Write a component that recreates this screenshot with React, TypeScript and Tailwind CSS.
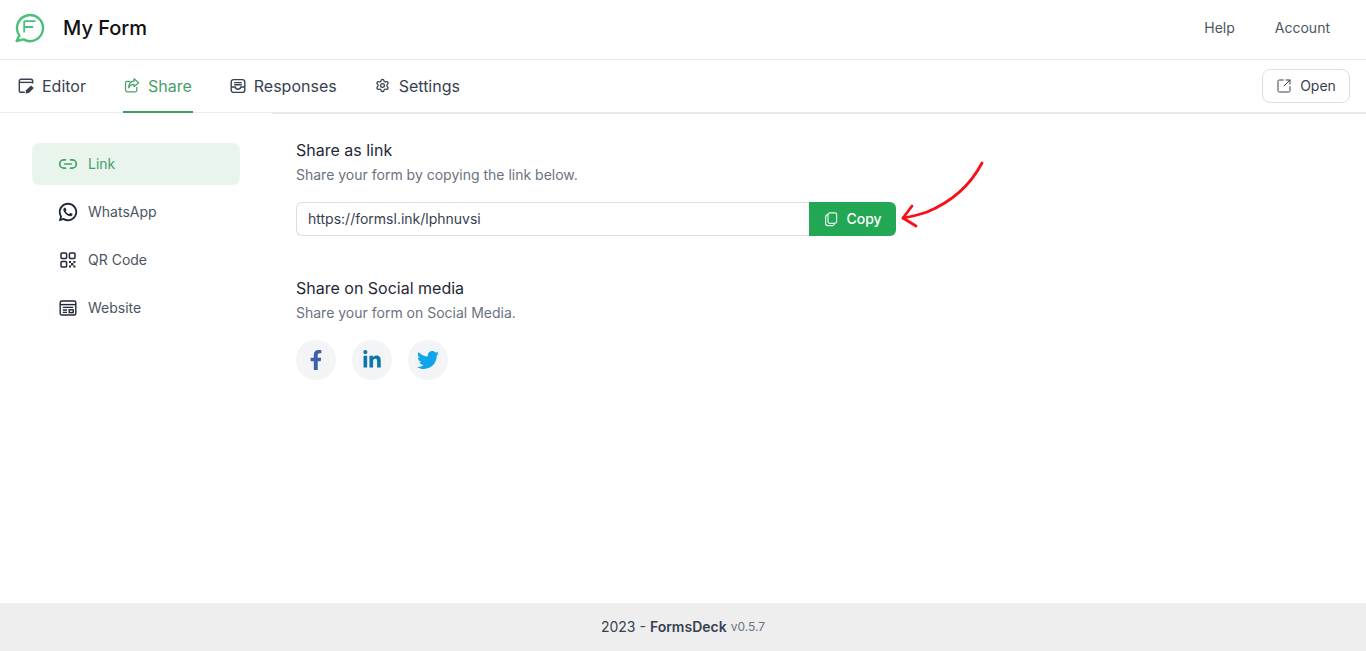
import { Link2, Settings, SquareArrowOutUpRight } from "lucide-react"
import { RiWhatsappLine } from "react-icons/ri"
import { FaFacebookF, FaLinkedinIn, FaTwitter } from "react-icons/fa"

const Logo = () => (
  <svg width="32" height="32" viewBox="0 0 32 32" fill="none" stroke="#48c07a" strokeWidth="2.4">
    <path d="M2.6 29 L5.4 23.6 A13 13 0 1 1 9.6 27.4 Z" strokeLinejoin="round" />
    <path d="M10.2 9.2H21.4M10.2 9.2V20.4M10.2 15H19.2" strokeWidth="1.8" />
  </svg>
)

const EditorIcon = () => (
  <svg width="16" height="16" viewBox="0 0 16 16" fill="none" stroke="#374151" strokeWidth="1.4">
    <path d="M6.8 14.3H3.2A1.9 1.9 0 0 1 1.3 12.4V3.2A1.9 1.9 0 0 1 3.2 1.3H12.8A1.9 1.9 0 0 1 14.7 3.2V5.6" />
    <path d="M1.5 4.4H14.5" />
    <path d="M7.6 15.6 L8 12.2 L13 7.4 L15.8 10 L11 15 Z" fill="#374151" stroke="none" />
  </svg>
)

const ShareIcon = () => (
  <svg width="17" height="17" viewBox="0 0 17 17" fill="none" stroke="currentColor" strokeWidth="1.3" strokeLinejoin="round" strokeLinecap="round">
    <path d="M13.6 10.4V13.4A1.8 1.8 0 0 1 11.8 15.2H3.4A1.8 1.8 0 0 1 1.6 13.4V6A1.8 1.8 0 0 1 3.4 4.2H6" />
    <path d="M10.6 1.4L15.6 5.6L10.6 9.8V7.4C8 7.4 6.2 8.6 5 11C5 7 7 4 10.6 3.8Z" />
  </svg>
)

const ResponsesIcon = () => (
  <svg width="16" height="16" viewBox="0 0 16 16" fill="none" stroke="#374151" strokeWidth="1.4">
    <rect x="1.2" y="1.6" width="13.6" height="12.8" rx="2.4" />
    <path d="M1.2 9H5.2C5.6 10.6 6.6 11.2 8 11.2S10.4 10.6 10.8 9H14.8" />
    <path d="M4.2 4.6H11.8M4.2 6.8H11.8" />
  </svg>
)

const QrIcon = () => (
  <svg width="18" height="18" viewBox="0 0 18 18" fill="none" stroke="#1f2937" strokeWidth="1.5">
    <rect x="2" y="2" width="5.6" height="5.6" rx="1" />
    <rect x="10.4" y="2" width="5.6" height="5.6" rx="1" />
    <rect x="2" y="10.4" width="5.6" height="5.6" rx="1" />
    <path d="M10 10H12V12H10ZM14.4 10H16.4V12H14.4ZM12 12H14.4V14.4H12ZM10 14.4H12V16.6H10ZM14.4 14.4H16.4V16.6H14.4Z" fill="#1f2937" stroke="none" />
  </svg>
)

const WebsiteIcon = () => (
  <svg width="18" height="18" viewBox="0 0 18 18" fill="none" stroke="#1f2937" strokeWidth="1.4">
    <rect x="1.2" y="2" width="15.6" height="14" rx="1.6" />
    <path d="M1.2 5.6H16.8" />
    <path d="M3.8 8.4H14.2M3.8 11H8M3.8 13.4H8" />
    <rect x="10.2" y="10.8" width="4" height="2.8" />
  </svg>
)

const CopyIcon = () => (
  <svg width="16" height="16" viewBox="0 0 16 16" fill="none" stroke="currentColor" strokeWidth="1.2" strokeLinejoin="round" opacity="0.9">
    <rect x="5" y="1.8" width="8.6" height="10.6" rx="1.8" />
    <path d="M5 3.6C3.4 3.8 2.6 4.6 2.6 6V12.2C2.6 13.6 3.6 14.6 5 14.6H9.6C10.6 14.6 11.2 14 11.4 13" />
  </svg>
)

const CurvedArrow = () => (
  <svg
    className="absolute left-[900px] top-[158px]"
    width="88"
    height="72"
    viewBox="0 0 88 72"
    fill="none"
    stroke="#fb0f16"
    strokeWidth="2.8"
    strokeLinecap="round"
    strokeLinejoin="round"
  >
    <path d="M82 5C72 24 56 42 27 54C18 57 10 59 3 60" />
    <path d="M12 48L3 60L16 68" />
  </svg>
)

const tabs = [
  { label: "Editor", icon: <EditorIcon /> },
  { label: "Share", icon: <ShareIcon />, active: true },
  { label: "Responses", icon: <ResponsesIcon /> },
  { label: "Settings", icon: <Settings size={15} /> },
]

const sideItems = [
  { label: "Link", icon: <Link2 size={20} className="shrink-0" />, active: true },
  { label: "WhatsApp", icon: <RiWhatsappLine size={22} className="shrink-0" /> },
  { label: "QR Code", icon: <QrIcon /> },
  { label: "Website", icon: <WebsiteIcon /> },
]

const App = () => {
  return (
    <div className="relative flex h-[651px] flex-col overflow-hidden bg-white font-['Inter',sans-serif] text-gray-700">
      <header className="flex h-[60px] items-center justify-between border-b border-[#e9e9e9] pb-[3px] pl-[14px] pr-9">
        <div className="flex items-center gap-[17px]">
          <Logo />
          <h1 className="text-[20px] font-medium text-[#111111]">My Form</h1>
        </div>
        <nav className="flex items-center gap-10 text-sm text-[#4b5563]">
          <span>Help</span>
          <span>Account</span>
        </nav>
      </header>

      <div className="flex h-[52px] items-center justify-between pr-4">
        <div className="relative z-10 flex h-full items-stretch gap-9 pl-[17px]">
          {tabs.map(tab => (
            <div
              key={tab.label}
              className={`-mb-px flex items-center gap-2 border-b-2 px-px text-base ${
                tab.active ? "border-[#3f9d63] text-[#46a069]" : "border-transparent text-[#374151]"
              }`}
            >
              <span className="flex w-4 justify-center">{tab.icon}</span>
              <span>{tab.label}</span>
            </div>
          ))}
        </div>
        <button className="flex h-[34px] w-[88px] items-center justify-center gap-2 rounded-lg border border-[#dedede] text-sm text-[#374151]">
          <SquareArrowOutUpRight size={16} strokeWidth={1.5} />
          Open
        </button>
      </div>
      <div className="flex h-0.5">
        <div className="w-[272px] border-t border-[#ececec]" />
        <div className="flex-1 bg-[#e8e8e8]" />
      </div>

      <main className="flex flex-1">
        <aside className="flex w-[240px] shrink-0 flex-col gap-1.5 pl-8 pt-[29px]">
          {sideItems.map(item => (
            <div
              key={item.label}
              className={`flex h-[42px] items-center gap-[11px] rounded-lg pl-[27px] text-sm ${
                item.active ? "bg-[#e8f4ec] text-[#46a069]" : "text-[#4b5563]"
              }`}
            >
              <span className={`flex w-[18px] justify-center ${item.active ? "" : "text-[#1f2937]"}`}>{item.icon}</span>
              {item.label}
            </div>
          ))}
        </aside>

        <section className="pl-14 pt-[26px]">
          <h2 className="text-base font-normal leading-5 text-[#1f2937]">Share as link</h2>
          <p className="mt-1.5 text-sm leading-[18px] text-[#6b7280]">Share your form by copying the link below.</p>
          <div className="mt-[18px] flex h-[34px] w-[600px]">
            <div className="flex flex-1 items-center rounded-l-md border border-r-0 border-[#dddddd] pl-[11px] text-sm text-[#374151]">
              https://formsl.ink/lphnuvsi
            </div>
            <button className="flex w-[87px] items-center justify-center gap-[7px] rounded-r-md bg-[#22a855] text-sm font-medium text-white">
              <CopyIcon />
              Copy
            </button>
          </div>

          <h2 className="mt-[42px] text-base font-normal leading-5 text-[#1f2937]">Share on Social media</h2>
          <p className="mt-1.5 text-sm leading-[18px] text-[#6b7280]">Share your form on Social Media.</p>
          <div className="mt-[18px] flex gap-4">
            <div className="flex h-10 w-10 items-center justify-center rounded-full bg-[#f3f4f6] text-[#3b5fa8]">
              <FaFacebookF size={20} />
            </div>
            <div className="flex h-10 w-10 items-center justify-center rounded-full bg-[#f3f4f6] text-[#0e76a8]">
              <FaLinkedinIn size={20} />
            </div>
            <div className="flex h-10 w-10 items-center justify-center rounded-full bg-[#f3f4f6] text-[#0ea5e9]">
              <FaTwitter size={22} />
            </div>
          </div>
        </section>
      </main>

      <footer className="flex h-12 items-center justify-center gap-1 bg-[#eeeeee] text-sm text-[#374151]">
        <span>2023 -</span>
        <span className="font-semibold">FormsDeck</span>
        <span className="text-xs text-[#6b7280]">v0.5.7</span>
      </footer>

      <CurvedArrow />
    </div>
  )
}

export default App
